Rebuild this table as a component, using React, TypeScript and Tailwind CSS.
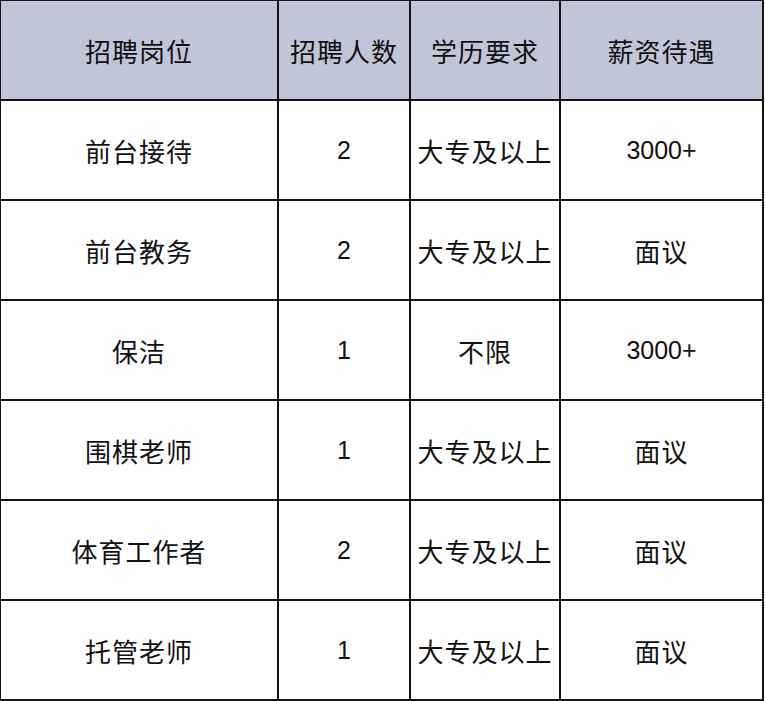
import React from 'react';

const headers = ['招聘岗位', '招聘人数', '学历要求', '薪资待遇'];

const rows: string[][] = [
  ['前台接待', '2', '大专及以上', '3000+'],
  ['前台教务', '2', '大专及以上', '面议'],
  ['保洁', '1', '不限', '3000+'],
  ['围棋老师', '1', '大专及以上', '面议'],
  ['体育工作者', '2', '大专及以上', '面议'],
  ['托管老师', '1', '大专及以上', '面议'],
];

const isLatin = (s: string) => /^[0-9+]+$/.test(s);

function Cell({ text, header }: { text: string; header?: boolean }) {
  return (
    <div
      className={`flex items-center justify-center text-[#111] ${header ? 'bg-[#c0c6d8]' : 'bg-white'}`}
    >
      {isLatin(text) ? (
        <span className="text-[25px] pt-[2px]" style={{ fontFamily: '"Liberation Sans", Arial, sans-serif' }}>
          {text}
        </span>
      ) : (
        <span
          className="text-[26px] tracking-[1px] pt-[1px]"
          style={{ fontFamily: '"Noto Sans CJK SC", "Liberation Sans", sans-serif' }}
        >
          {text}
        </span>
      )}
    </div>
  );
}

export default function App() {
  return (
    <div className="bg-white w-[765px] h-[701px]">
      <div className="grid w-[764px] grid-cols-[276px_130px_148px_201px] auto-rows-[98px] gap-[2px] bg-[#141414] pt-[1px] pl-[1px] pr-[2px] pb-[2px]">
        {headers.map((h) => (
          <Cell key={h} text={h} header />
        ))}
        {rows.map((r, i) =>
          r.map((c, j) => <Cell key={`${i}-${j}`} text={c} />),
        )}
      </div>
    </div>
  );
}
